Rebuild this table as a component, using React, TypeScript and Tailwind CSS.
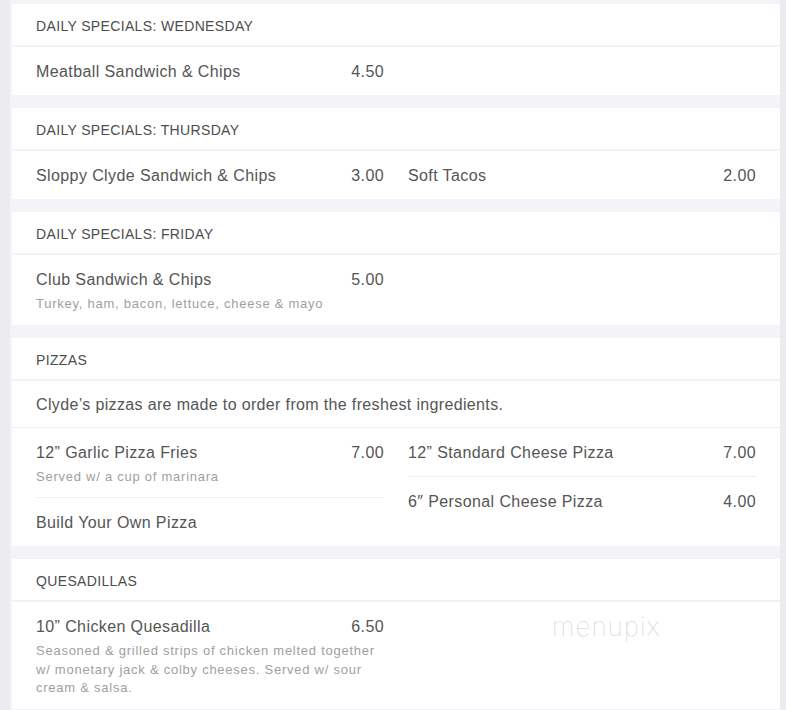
type Item = {
  name: string;
  price?: string;
  desc?: string;
};

const Card = ({
  title,
  children,
}: {
  title: string;
  children: React.ReactNode;
}) => (
  <div className="bg-white">
    <div className="flex h-[43px] items-center border-b-2 border-[#f2f2f6] px-6 pt-1 text-[14px] tracking-[0.35px] text-[#4d4d4d]">
      {title}
    </div>
    {children}
  </div>
);

const MenuItem = ({ item, divider }: { item: Item; divider?: boolean }) => (
  <div
    className={
      divider ? "border-b border-[#ededf1] pt-[13px] pb-[11px]" : "pt-[13px] pb-[11px]"
    }
  >
    <div className="flex items-start justify-between text-[16px] leading-6 tracking-[0.4px] text-[#555]">
      <span>{item.name}</span>
      {item.price && <span>{item.price}</span>}
    </div>
    {item.desc && (
      <p className="mt-[3px] text-[13px] leading-[18.5px] tracking-[0.75px] text-[#a0a0a0]">
        {item.desc}
      </p>
    )}
  </div>
);

const Column = ({ items }: { items: Item[] }) => (
  <div className="flex flex-col">
    {items.map((item, i) => (
      <MenuItem key={item.name} item={item} divider={i < items.length - 1} />
    ))}
  </div>
);

const Items = ({ left, right }: { left: Item[]; right?: Item[] }) => (
  <div className="grid grid-cols-2 gap-x-6 px-6">
    <Column items={left} />
    {right ? <Column items={right} /> : <div />}
  </div>
);

export default function App() {
  return (
    <div
      className="flex min-h-[710px] w-full bg-[#f4f4f8]"
      style={{ fontFamily: '"Liberation Sans", Arial, sans-serif' }}
    >
      <div className="w-[10px] shrink-0 bg-[#ececf0]" />
      <div className="flex flex-1 flex-col gap-[13px] pt-[4px] pl-[2px]">
        <Card title="DAILY SPECIALS: WEDNESDAY">
          <Items left={[{ name: "Meatball Sandwich & Chips", price: "4.50" }]} />
        </Card>

        <Card title="DAILY SPECIALS: THURSDAY">
          <Items
            left={[{ name: "Sloppy Clyde Sandwich & Chips", price: "3.00" }]}
            right={[{ name: "Soft Tacos", price: "2.00" }]}
          />
        </Card>

        <Card title="DAILY SPECIALS: FRIDAY">
          <Items
            left={[
              {
                name: "Club Sandwich & Chips",
                price: "5.00",
                desc: "Turkey, ham, bacon, lettuce, cheese & mayo",
              },
            ]}
          />
        </Card>

        <Card title="PIZZAS">
          <div className="border-b border-[#ededf1] px-6 pt-3 pb-[10px] text-[16px] leading-6 tracking-[0.35px] text-[#555]">
            Clyde’s pizzas are made to order from the freshest ingredients.
          </div>
          <Items
            left={[
              {
                name: "12” Garlic Pizza Fries",
                price: "7.00",
                desc: "Served w/ a cup of marinara",
              },
              { name: "Build Your Own Pizza" },
            ]}
            right={[
              { name: "12” Standard Cheese Pizza", price: "7.00" },
              { name: "6″ Personal Cheese Pizza", price: "4.00" },
            ]}
          />
        </Card>

        <Card title="QUESADILLAS">
          <div className="relative">
            <Items
              left={[
                {
                  name: "10” Chicken Quesadilla",
                  price: "6.50",
                  desc: "Seasoned & grilled strips of chicken melted together w/ monetary jack & colby cheeses. Served w/ sour cream & salsa.",
                },
              ]}
            />
            <span
              className="absolute left-[540px] top-[5px] text-[26px] font-thin tracking-[1px] text-[#cfcfcf]"
              style={{ fontFamily: "Inter, sans-serif" }}
            >
              menupix
            </span>
          </div>
        </Card>
      </div>
      <div className="w-[6px] shrink-0 bg-[#ececf0]" />
    </div>
  );
}
